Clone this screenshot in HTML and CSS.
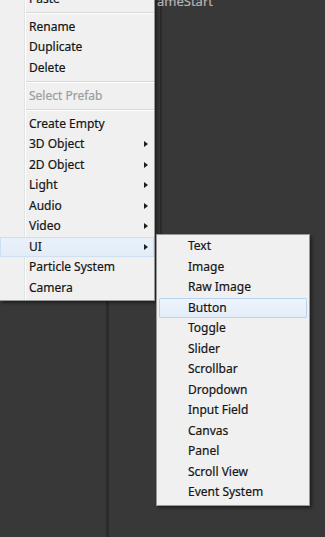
FILE: index.html
```html
<!DOCTYPE html>
<html>
<head>
<meta charset="utf-8">
<link rel="stylesheet" href="styles.css">
</head>
<body>
<div class="scene">
  <div class="divider-top"></div>
  <div class="divider-bottom"></div>
  <div class="panel-title">ameStart</div>

  <div class="menu main-menu">
    <div class="item">Paste</div>
    <div class="sep"></div>
    <div class="item">Rename</div>
    <div class="item">Duplicate</div>
    <div class="item">Delete</div>
    <div class="sep"></div>
    <div class="item disabled">Select Prefab</div>
    <div class="sep"></div>
    <div class="item">Create Empty</div>
    <div class="item sub">3D Object</div>
    <div class="item sub">2D Object</div>
    <div class="item sub">Light</div>
    <div class="item sub">Audio</div>
    <div class="item sub">Video</div>
    <div class="item sub active">UI</div>
    <div class="item">Particle System</div>
    <div class="item">Camera</div>
  </div>

  <div class="menu sub-menu">
    <div class="item">Text</div>
    <div class="item">Image</div>
    <div class="item">Raw Image</div>
    <div class="item hover">Button</div>
    <div class="item">Toggle</div>
    <div class="item">Slider</div>
    <div class="item">Scrollbar</div>
    <div class="item">Dropdown</div>
    <div class="item">Input Field</div>
    <div class="item">Canvas</div>
    <div class="item">Panel</div>
    <div class="item">Scroll View</div>
    <div class="item">Event System</div>
  </div>
</div>
</body>
</html>
```

FILE: styles.css
```css
html, body {
  margin: 0;
  padding: 0;
  background: #383838;
}
.scene {
  position: relative;
  width: 325px;
  height: 537px;
  overflow: hidden;
  background: #383838;
  font-family: "Noto Sans", "Open Sans", sans-serif;
  font-size: 12px;
}
.panel-title {
  position: absolute;
  left: 157px;
  top: -7px;
  color: #b4b4b4;
  font-size: 13px;
  line-height: 16px;
  -webkit-text-stroke: 0.2px #b4b4b4;
}
.divider-top {
  position: absolute;
  left: 160px;
  top: 0;
  width: 2px;
  height: 240px;
  background: #2a2a2a;
}
.divider-bottom {
  position: absolute;
  left: 106px;
  top: 290px;
  width: 3px;
  height: 247px;
  background: #2b2b2b;
}
.menu {
  position: absolute;
  display: flex;
  flex-direction: column;
  background: #f0f0f0;
  box-shadow: 2px 2px 3px rgba(0,0,0,0.45);
}
.main-menu {
  left: 0;
  top: -13.25px;
  width: 154px;
  padding: 1px 0 2px 0;
  border: 1px solid #979797;
  border-left: none;
  background: linear-gradient(to right, #f0f0f0 0, #f0f0f0 24px, #e2e3e3 24px, #e2e3e3 25px, #ffffff 25px, #ffffff 26px, #f0f0f0 26px);
}
.sub-menu {
  left: 156px;
  top: 234px;
  width: 152px;
  padding: 1px 0 2.5px 0;
  border: 1px solid #979797;
}
.item {
  position: relative;
  height: 20.5px;
  line-height: 20.5px;
  color: #151515;
  padding-left: 29px;
  white-space: nowrap;
  -webkit-text-stroke: 0.2px #151515;
}
.sub-menu .item {
  padding-left: 31px;
}
.item.disabled {
  color: #9d9d9d;
  -webkit-text-stroke: 0.2px #9d9d9d;
}
.sep {
  height: 7.5px;
  display: flex;
  flex-direction: column;
  justify-content: center;
  margin-left: 26px;
}
.sep::before {
  content: "";
  display: block;
  height: 1px;
  background: #d7d7d7;
}
.sep::after {
  content: "";
  display: block;
  height: 1px;
  background: #ffffff;
}
.item.sub::after {
  content: "";
  position: absolute;
  right: 6px;
  top: 7px;
  width: 0;
  height: 0;
  border-top: 3.5px solid transparent;
  border-bottom: 3.5px solid transparent;
  border-left: 4px solid #1e1e1e;
}
.item.active {
  background: linear-gradient(to bottom, #e9f1fb, #e2ecf8);
  box-shadow: inset 0 0 0 1px #cfdff2;
}
.item.hover {
  margin: 0 2px;
  padding-left: 29px;
  border-radius: 2px;
  background: linear-gradient(to bottom, #eef4fc, #e3edf9);
  box-shadow: inset 0 0 0 1px #b8d3f2;
}
```
